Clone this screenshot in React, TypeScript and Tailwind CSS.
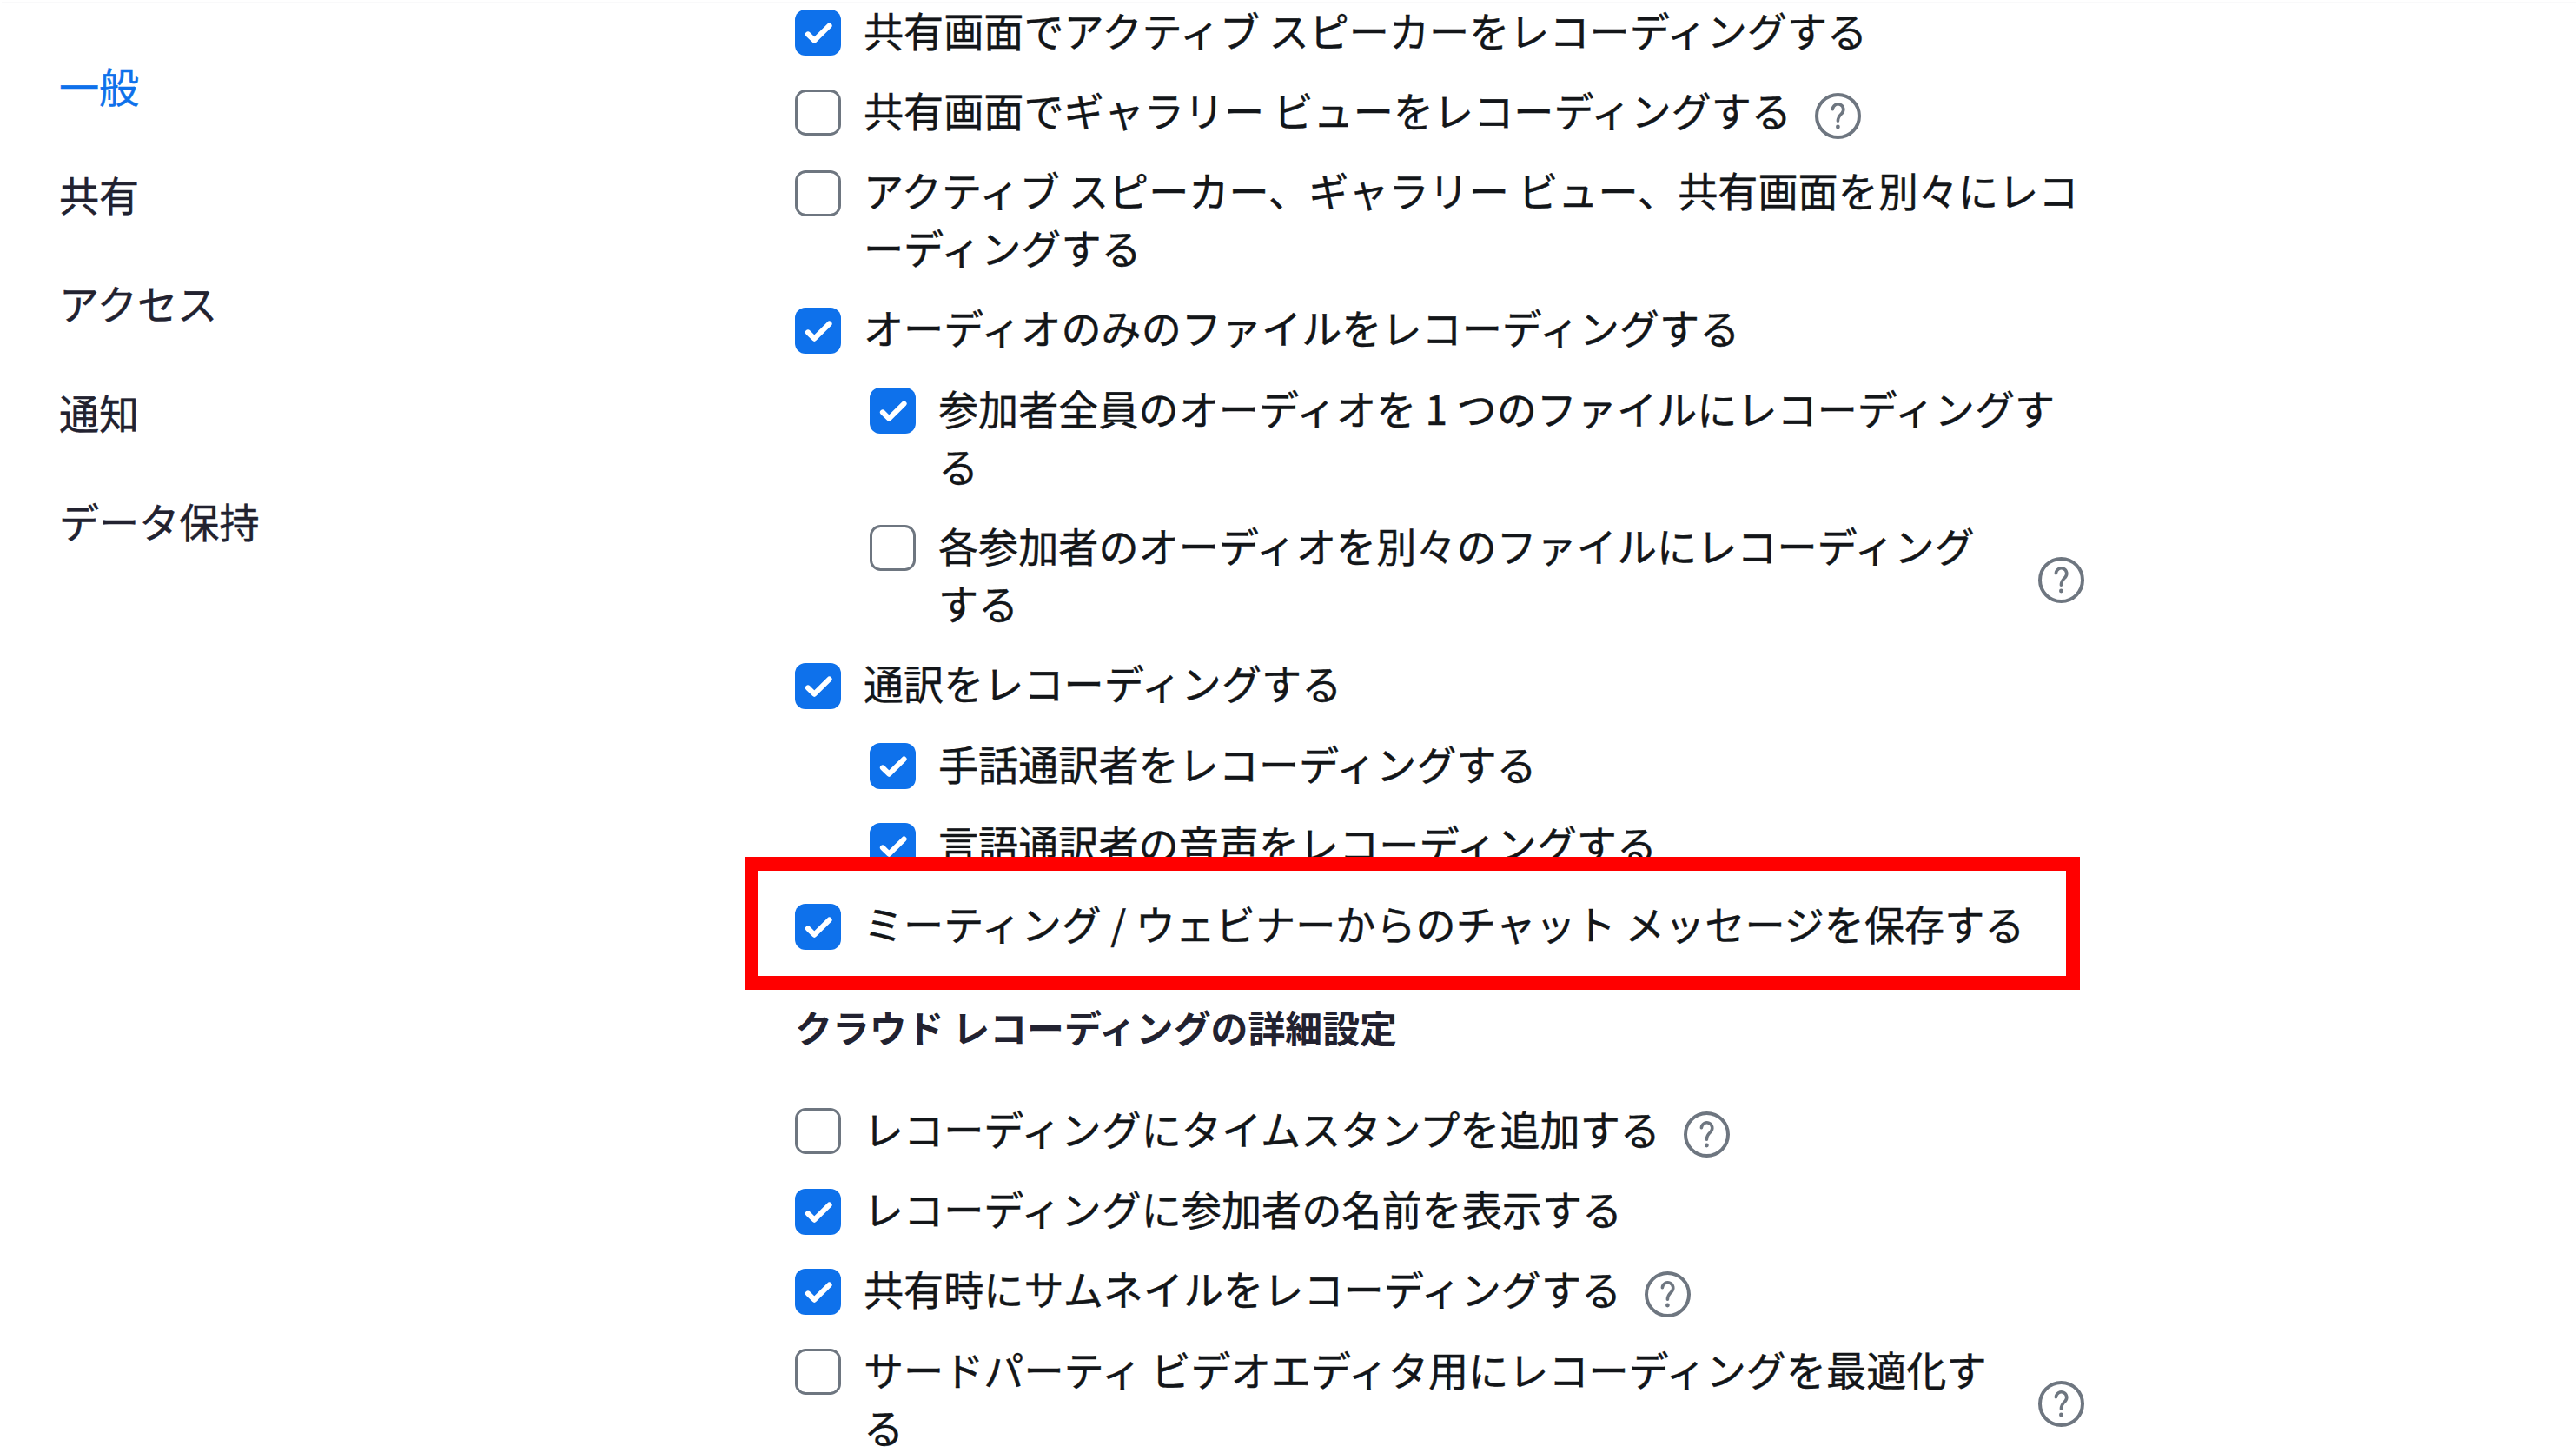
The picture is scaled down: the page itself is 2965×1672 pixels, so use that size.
import React from "react";

const Box = ({ on }: { on?: boolean }) =>
  on ? (
    <svg className="h-[53px] w-[53px] shrink-0" viewBox="0 0 53 53">
      <rect width="53" height="53" rx="12" fill="#0e71eb" />
      <path d="M15 28.500 L22.300 35.600 L39.500 18.600" fill="none" stroke="#fff" strokeWidth="6.200" strokeLinecap="round" strokeLinejoin="round" />
    </svg>
  ) : (
    <svg className="h-[53px] w-[53px] shrink-0" viewBox="0 0 53 53">
      <rect x="1.500" y="1.500" width="50" height="50" rx="11" fill="#fff" stroke="#6e7680" strokeWidth="3" />
    </svg>
  );

const Help = () => (
  <svg className="h-[53px] w-[53px] shrink-0" viewBox="0 0 53 53" fill="none" stroke="#6e7680">
    <circle cx="26.500" cy="26.500" r="24.500" strokeWidth="4" />
    <path d="M20.400 18.600a6.200 6.200 0 1 1 10.600 4.800c-2.600 2.500-4.600 4.200-4.600 8.800" strokeWidth="3.600" strokeLinecap="round" />
    <circle cx="26.400" cy="39" r="2.400" fill="#6e7680" stroke="none" />
  </svg>
);

type RowProps = { on?: boolean; sub?: boolean; lines: string[]; help?: boolean };

const Row = ({ on, sub, lines, help }: RowProps) => (
  <div className={sub ? "flex items-start pl-[86px]" : "flex items-start"}>
    <div className="flex h-[66px] items-center">
      <Box on={on} />
    </div>
    <div className="-mt-[4px] mb-[4px] ml-[26px] whitespace-nowrap leading-[66px] [-webkit-text-stroke:0.4px]">
      {lines.map((l) => (
        <div key={l}>{l}</div>
      ))}
    </div>
    {help && (
      <div className={lines.length > 1 ? "ml-auto self-center pt-[7px]" : "ml-[27px] pt-[10px]"}>
        <Help />
      </div>
    )}
  </div>
);

export default function App() {
  return (
    <div className="flex h-[1672px] w-[2965px] flex-col overflow-hidden bg-white font-['Noto_Sans_CJK_JP',sans-serif] text-[46.13px] text-[#131619]">
      <div className="ml-[2px] mt-[2px] h-[2px] shrink-0 bg-[#f9f9fa]" />
      <div className="flex">
        <nav className="flex w-[915px] shrink-0 flex-col gap-[59.2px] pl-[68px] pt-[61px] leading-[66px] text-[#222230] [-webkit-text-stroke:0.4px]">
          <div className="text-[#0e71eb]">一般</div>
          <div>共有</div>
          <div>アクセス</div>
          <div>通知</div>
          <div>データ保持</div>
        </nav>
        <main className="flex w-[1484px] shrink-0 flex-col gap-[26.3px] pt-[0.5px]">
          <Row on lines={["共有画面でアクティブ スピーカーをレコーディングする"]} />
          <Row lines={["共有画面でギャラリー ビューをレコーディングする"]} help />
          <Row lines={["アクティブ スピーカー、ギャラリー ビュー、共有画面を別々にレコ", "ーディングする"]} />
          <Row on lines={["オーディオのみのファイルをレコーディングする"]} />
          <Row on sub lines={["参加者全員のオーディオを 1 つのファイルにレコーディングす", "る"]} />
          <Row sub lines={["各参加者のオーディオを別々のファイルにレコーディング", "する"]} help />
          <Row on lines={["通訳をレコーディングする"]} />
          <Row on sub lines={["手話通訳者をレコーディングする"]} />
          <Row on sub lines={["言語通訳者の音声をレコーディングする"]} />
          <div className="relative">
            <div className="absolute -left-[58px] -top-[47px] h-[153px] w-[1537px] border-[16px] border-[#ff0000]" />
            <Row on lines={["ミーティング / ウェビナーからのチャット メッセージを保存する"]} />
          </div>
          <h2 className="-mt-px mb-[28px] box-content h-[66px] whitespace-nowrap pt-[24px] text-[42.9px] font-bold leading-[66px] text-[#222230]">
            クラウド レコーディングの詳細設定
          </h2>
          <Row lines={["レコーディングにタイムスタンプを追加する"]} help />
          <Row on lines={["レコーディングに参加者の名前を表示する"]} />
          <Row on lines={["共有時にサムネイルをレコーディングする"]} help />
          <Row lines={["サードパーティ ビデオエディタ用にレコーディングを最適化す", "る"]} help />
        </main>
      </div>
    </div>
  );
}
